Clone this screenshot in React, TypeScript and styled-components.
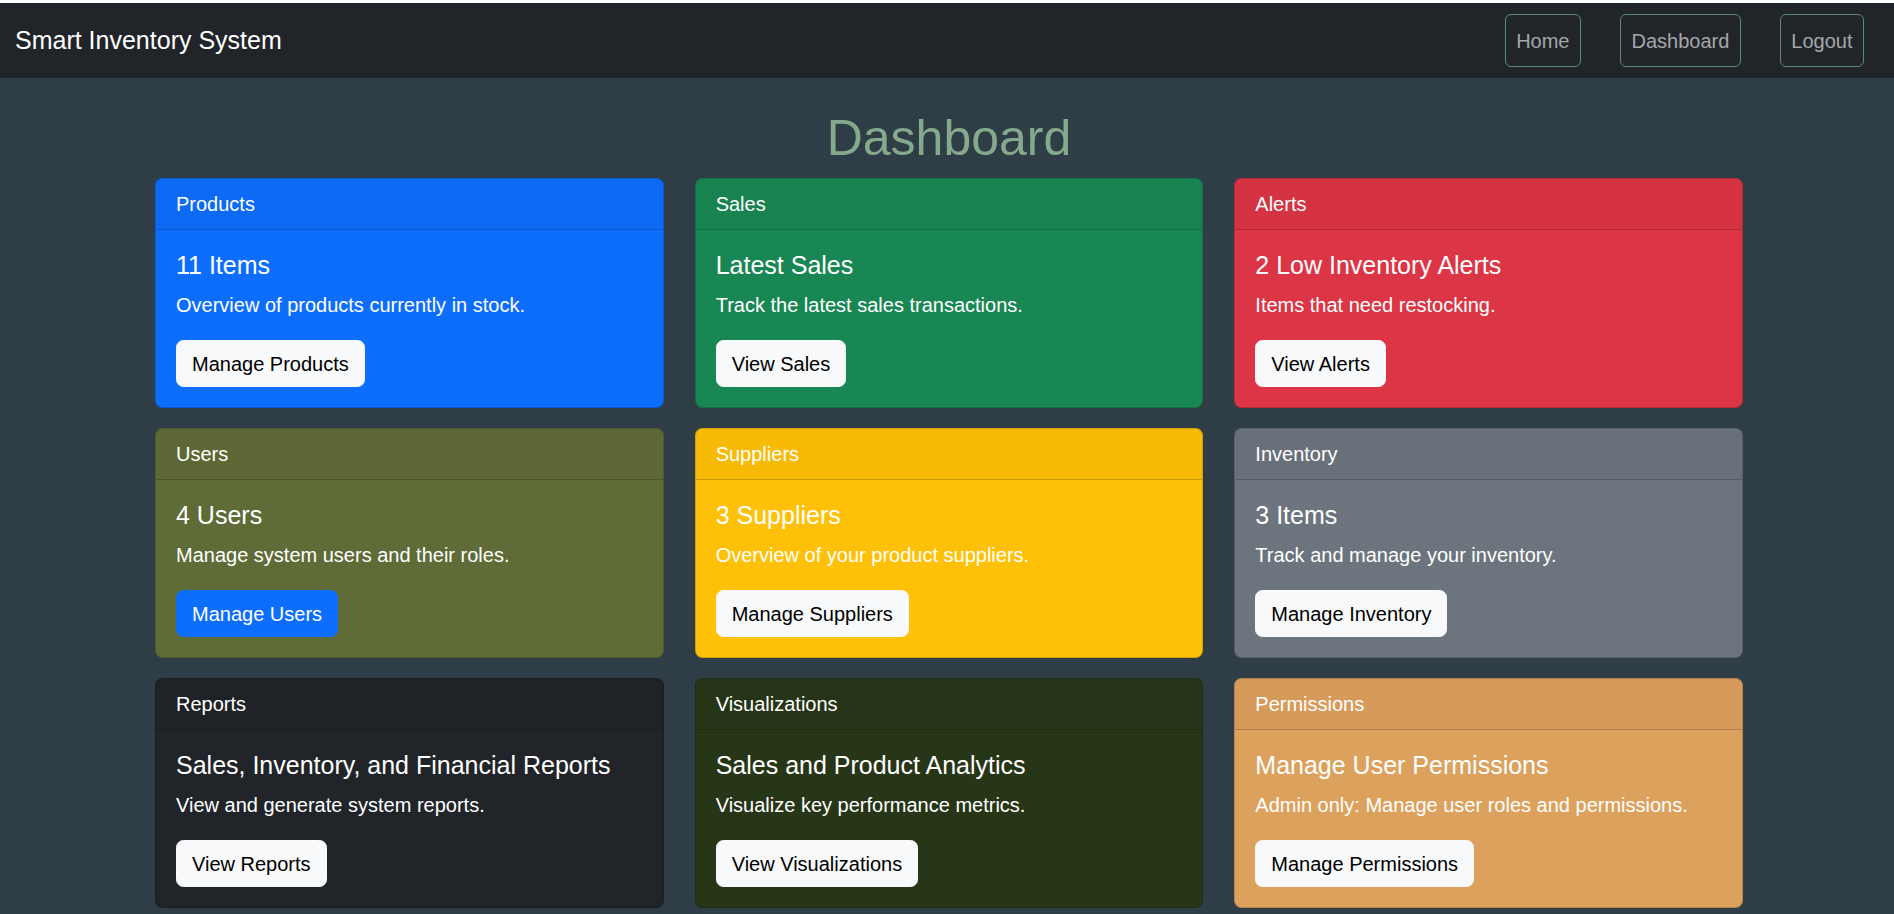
import React from "react";
import styled, { createGlobalStyle } from "styled-components";

const GlobalStyle = createGlobalStyle`
  html, body {
    margin: 0;
    padding: 0;
    background: #ffffff;
  }
  *, *::before, *::after { box-sizing: border-box; }
  body {
    font-family: "Liberation Sans", Arial, sans-serif;
    font-size: 20px;
    line-height: 1.5;
    color: #212529;
  }
`;

const Page = styled.div`
  min-height: 100vh;
  border-top: 3px solid #ffffff;
  background: #2f3e46;
`;

const NavBar = styled.nav`
  height: 75px;
  background: #212529;
  display: flex;
  align-items: center;
  justify-content: space-between;
  padding: 0 30px 0 15px;
`;

const Brand = styled.a`
  color: #ffffff;
  font-size: 25px;
  line-height: 37.5px;
  text-decoration: none;
  padding-top: 1px;
`;

const NavList = styled.div`
  display: flex;
  align-items: center;
  gap: 39px;
`;

const NavButton = styled.a`
  display: inline-block;
  color: rgba(255, 255, 255, 0.6);
  font-size: 20px;
  line-height: 30px;
  padding: 10.5px 10.5px;
  border: 1.5px solid #588a79;
  border-radius: 6px;
  text-decoration: none;
`;

const Container = styled.main`
  width: 1592px;
  margin: 30px auto 0;
  padding-left: 4px;
`;

const Title = styled.h1`
  margin: 0 0 10px;
  text-align: center;
  color: #84a98c;
  font-size: 50px;
  font-weight: 500;
  line-height: 60px;
`;

const Grid = styled.div`
  display: grid;
  grid-template-columns: repeat(3, 1fr);
  column-gap: 31px;
  row-gap: 20px;
`;

const Card = styled.section<{ $bg: string }>`
  background: ${(p) => p.$bg};
  border: 1px solid rgba(0, 0, 0, 0.175);
  border-radius: 7.5px;
  color: #ffffff;
  overflow: hidden;
`;

const CardHeader = styled.div`
  padding: 10px 20px;
  font-size: 20px;
  line-height: 30px;
  background: rgba(0, 0, 0, 0.03);
  border-bottom: 1px solid rgba(0, 0, 0, 0.175);
`;

const CardBody = styled.div`
  padding: 20px;
`;

const CardTitle = styled.h5`
  margin: 0 0 10px;
  font-size: 25px;
  font-weight: 500;
  line-height: 30px;
`;

const CardText = styled.p`
  margin: 0 0 20px;
  font-size: 20px;
  line-height: 30px;
`;

const Button = styled.a<{ $primary?: boolean }>`
  display: inline-block;
  font-size: 20px;
  line-height: 30px;
  padding: 7.5px 15px;
  border-radius: 7.5px;
  border: 1px solid ${(p) => (p.$primary ? "#0d6efd" : "#f8f9fa")};
  background: ${(p) => (p.$primary ? "#0d6efd" : "#f8f9fa")};
  color: ${(p) => (p.$primary ? "#ffffff" : "#000000")};
  text-decoration: none;
`;

type CardData = {
  header: string;
  bg: string;
  title: string;
  text: string;
  button: string;
  primary?: boolean;
};

const cards: CardData[] = [
  { header: "Products", bg: "#0d6efd", title: "11 Items", text: "Overview of products currently in stock.", button: "Manage Products" },
  { header: "Sales", bg: "#198754", title: "Latest Sales", text: "Track the latest sales transactions.", button: "View Sales" },
  { header: "Alerts", bg: "#dc3545", title: "2 Low Inventory Alerts", text: "Items that need restocking.", button: "View Alerts" },
  { header: "Users", bg: "#606c38", title: "4 Users", text: "Manage system users and their roles.", button: "Manage Users", primary: true },
  { header: "Suppliers", bg: "#ffc107", title: "3 Suppliers", text: "Overview of your product suppliers.", button: "Manage Suppliers" },
  { header: "Inventory", bg: "#6c757d", title: "3 Items", text: "Track and manage your inventory.", button: "Manage Inventory" },
  { header: "Reports", bg: "#212529", title: "Sales, Inventory, and Financial Reports", text: "View and generate system reports.", button: "View Reports" },
  { header: "Visualizations", bg: "#283618", title: "Sales and Product Analytics", text: "Visualize key performance metrics.", button: "View Visualizations" },
  { header: "Permissions", bg: "#dda15e", title: "Manage User Permissions", text: "Admin only: Manage user roles and permissions.", button: "Manage Permissions" },
];

export default function App() {
  return (
    <>
      <GlobalStyle />
      <Page>
        <NavBar>
          <Brand href="#">Smart Inventory System</Brand>
          <NavList>
            <NavButton href="#">Home</NavButton>
            <NavButton href="#">Dashboard</NavButton>
            <NavButton href="#">Logout</NavButton>
          </NavList>
        </NavBar>
        <Container>
          <Title>Dashboard</Title>
          <Grid>
            {cards.map((c) => (
              <Card key={c.header} $bg={c.bg}>
                <CardHeader>{c.header}</CardHeader>
                <CardBody>
                  <CardTitle>{c.title}</CardTitle>
                  <CardText>{c.text}</CardText>
                  <Button href="#" $primary={c.primary}>{c.button}</Button>
                </CardBody>
              </Card>
            ))}
          </Grid>
        </Container>
      </Page>
    </>
  );
}
